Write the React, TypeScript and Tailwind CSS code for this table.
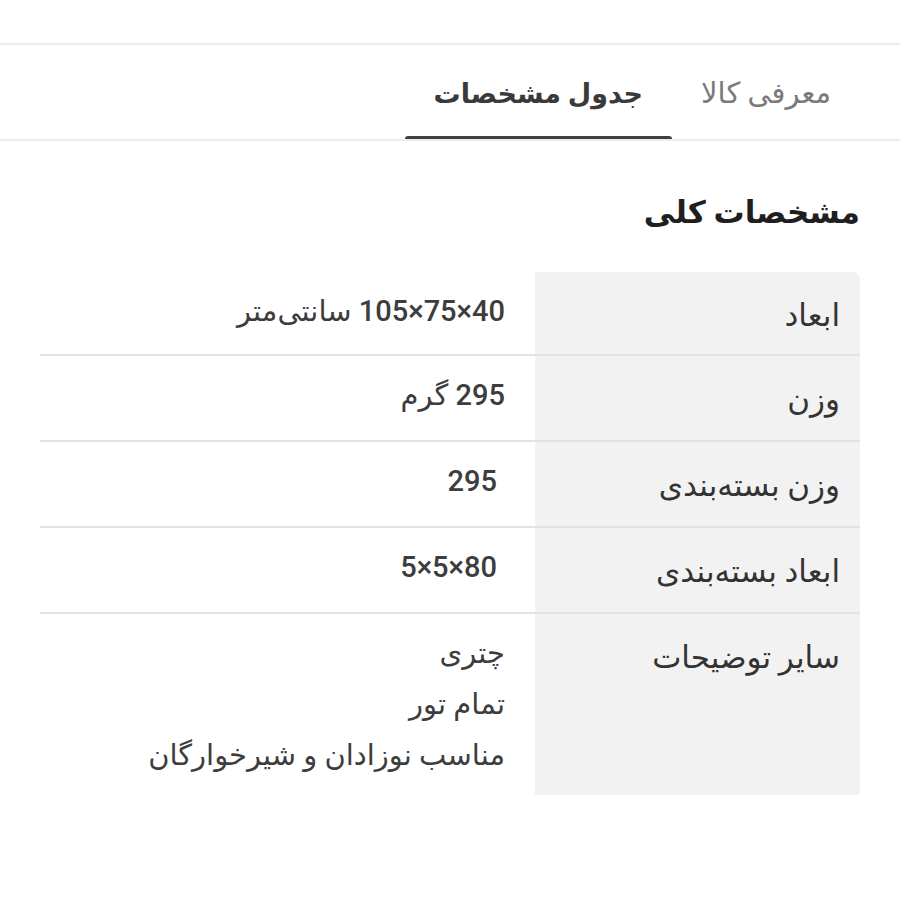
import React from "react"

const specs = [
  { label: "ابعاد", values: ["40×75×105 سانتی‌متر"], h: "h-[84px]" },
  { label: "وزن", values: ["295 گرم"], h: "h-[86px]" },
  { label: "وزن بسته‌بندی", values: ["295"], h: "h-[86px]", inset: true },
  { label: "ابعاد بسته‌بندی", values: ["80×5×5"], h: "h-[86px]", inset: true },
  { label: "سایر توضیحات", values: ["چتری", "تمام تور", "مناسب نوزادان و شیرخوارگان"], h: "h-[181px]", last: true },
]

export default function App() {
  return (
    <div
      dir="rtl"
      className="w-[900px] h-[900px] bg-white overflow-hidden"
      style={{ fontFamily: "Roboto, 'Noto Sans', 'DejaVu Sans', sans-serif" }}
    >
      <div className="h-[45px] border-b-2 border-[#ececec]" />

      {/* tabs */}
      <div className="flex h-[96px] items-stretch border-b-2 border-[#ececec] pr-10">
        <div className="flex items-center px-[29px] pt-1 text-[29px] text-[#7a7a7a]">
          معرفی کالا
        </div>
        <div className="relative flex items-center px-[29px] pt-1 text-[27px] font-bold text-[#3a3a3a]">
          جدول مشخصات
          <div className="absolute bottom-0 left-0 right-0 h-[3px] rounded-t-sm bg-[#404040]" />
        </div>
      </div>

      <div className="px-10">
        <h2 className="pt-[52px] pb-[39px] text-[31px] leading-[40px] font-bold text-[#1f1f1f]">
          مشخصات کلی
        </h2>

        <div className="flex flex-col">
          {specs.map((row, i) => (
            <div
              key={i}
              className={`flex ${row.h} ${row.last ? "" : "border-b-2 border-[#e3e3e3]"}`}
            >
              <div
                className={`w-[325px] shrink-0 bg-[#f2f2f2] pr-5 pt-[26px] text-[31px] leading-[36px] text-[#333333] ${
                  i === 0 ? "rounded-tr-lg" : ""
                } ${row.last ? "rounded-br-sm" : ""}`}
              >
                {row.label}
              </div>
              <div
                className={`flex flex-1 flex-col gap-[15px] pt-[21px] text-[29px] leading-[36px] font-medium text-[#3d3d3d] ${
                  row.inset ? "pr-[38px]" : "pr-[30px]"
                }`}
              >
                {row.values.map((v, j) => (
                  <div key={j}>{v}</div>
                ))}
              </div>
            </div>
          ))}
        </div>
      </div>
    </div>
  )
}
